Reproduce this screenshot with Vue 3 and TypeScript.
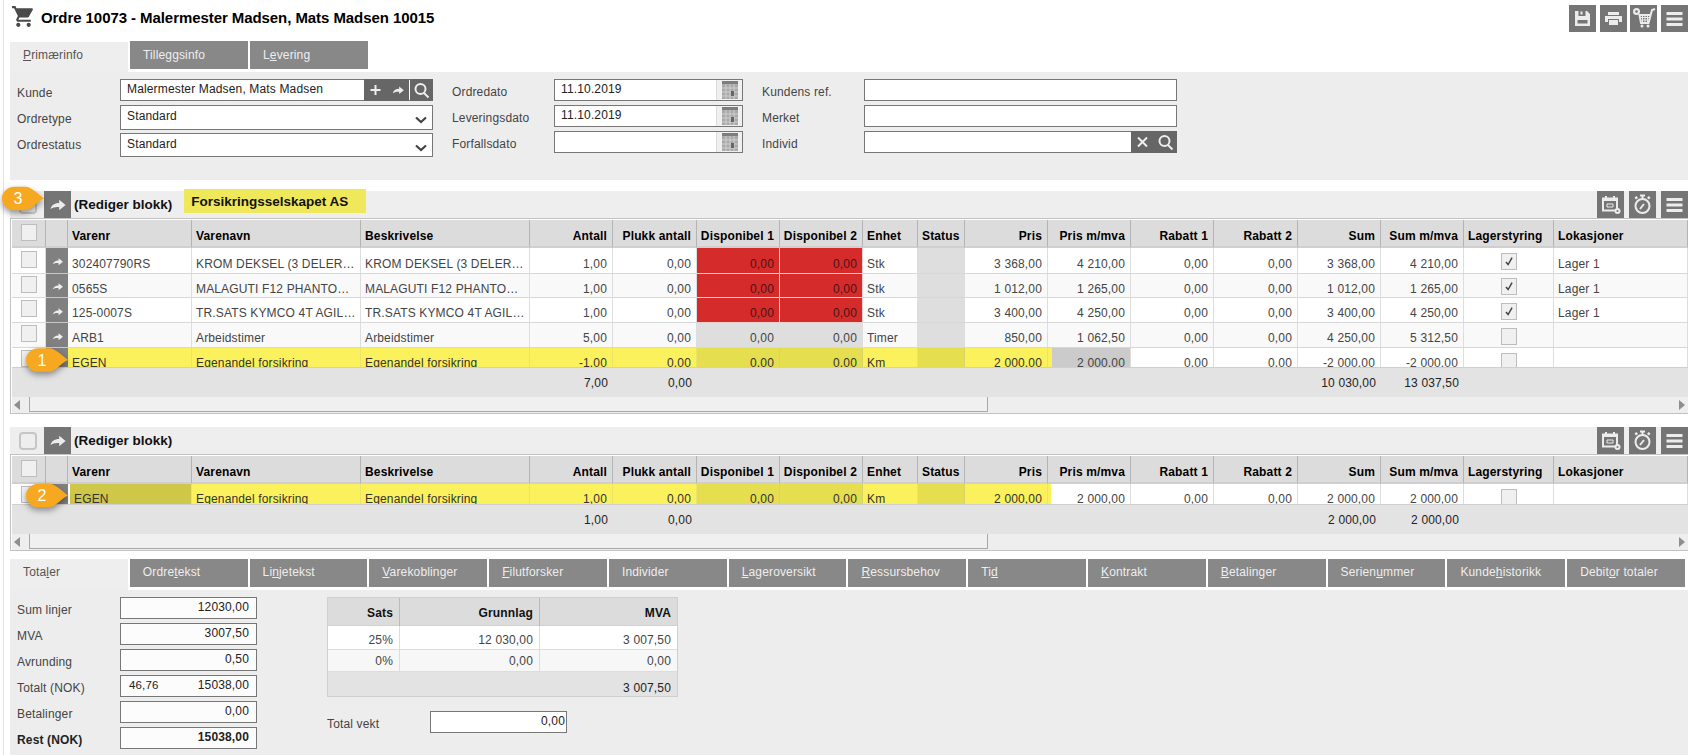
<script setup lang="ts">
type Tab = { a: string; k?: string; b?: string }
type Row = {
  no: string; name: string; desc: string; qty: string; unit: string; price: string; priceVat: string
  sum: string; sumVat: string; h: number; disp: 'red' | 'grey' | 'hl'; hl?: 1 | 2; checked?: boolean; lok?: string
}
type Col = { key: string; label: string; right?: boolean }

const arrow = 'M3 18c1-5 5-8 11-8V6l8 6.5-8 6.5v-4c-4.500-.5-8 .5-11 2.500z'
const cart = 'M7 18c-1.100 0-1.990.9-1.990 2S5.900 22 7 22s2-.9 2-2-.9-2-2-2zM1 2v2h2l3.600 7.590-1.350 2.450c-.16.28-.25.61-.25.96 0 1.100.9 2 2 2h12v-2H7.420c-.14 0-.25-.11-.25-.25l.03-.12.9-1.630h7.450c.75 0 1.410-.41 1.750-1.030l3.580-6.490c.08-.14.12-.31.12-.48 0-.55-.45-1-1-1H5.210l-.94-2H1zm16 16c-1.100 0-1.990.9-1.990 2s.89 2 1.990 2 2-.9 2-2-.9-2-2-2z'

const topTabs: Tab[] = [{ a: '', k: 'P', b: 'rimærinfo' }, { a: 'Tilleggsinfo' }, { a: 'L', k: 'e', b: 'vering' }]
const bottomTabs: Tab[] = [
  { a: 'Tota', k: 'l', b: 'er' }, { a: 'Ordre', k: 't', b: 'ekst' }, { a: 'Li', k: 'n', b: 'jetekst' },
  { a: '', k: 'V', b: 'arekoblinger' }, { a: '', k: 'F', b: 'ilutforsker' }, { a: 'Individer' },
  { a: '', k: 'L', b: 'ageroversikt' }, { a: '', k: 'R', b: 'essursbehov' }, { a: 'Ti', k: 'd' },
  { a: '', k: 'K', b: 'ontrakt' }, { a: '', k: 'B', b: 'etalinger' }, { a: 'Serien', k: 'u', b: 'mmer' },
  { a: 'Kunde', k: 'h', b: 'istorikk' }, { a: 'Debit', k: 'o', b: 'r totaler' }
]

const columns: Col[] = [
  { key: 'no', label: 'Varenr' }, { key: 'name', label: 'Varenavn' }, { key: 'desc', label: 'Beskrivelse' },
  { key: 'qty', label: 'Antall', right: true }, { key: 'pick', label: 'Plukk antall', right: true },
  { key: 'd1', label: 'Disponibel 1', right: true }, { key: 'd2', label: 'Disponibel 2', right: true },
  { key: 'unit', label: 'Enhet' }, { key: 'status', label: 'Status' }, { key: 'price', label: 'Pris', right: true },
  { key: 'priceVat', label: 'Pris m/mva', right: true }, { key: 'r1', label: 'Rabatt 1', right: true },
  { key: 'r2', label: 'Rabatt 2', right: true }, { key: 'sum', label: 'Sum', right: true },
  { key: 'sumVat', label: 'Sum m/mva', right: true }, { key: 'lager', label: 'Lagerstyring' }, { key: 'lok', label: 'Lokasjoner' }
]

const blocks: { rows: Row[]; viewport: string; name?: string; totals: Record<string, string> }[] = [
  {
    name: 'Forsikringsselskapet AS',
    viewport: 'vp-large',
    totals: { qty: '7,00', pick: '0,00', sum: '10 030,00', sumVat: '13 037,50' },
    rows: [
      { no: '302407790RS', name: 'KROM DEKSEL (3 DELER…', desc: 'KROM DEKSEL (3 DELER…', qty: '1,00', unit: 'Stk', price: '3 368,00', priceVat: '4 210,00', sum: '3 368,00', sumVat: '4 210,00', h: 26, disp: 'red', checked: true, lok: 'Lager 1' },
      { no: '0565S', name: 'MALAGUTI F12 PHANTO…', desc: 'MALAGUTI F12 PHANTO…', qty: '1,00', unit: 'Stk', price: '1 012,00', priceVat: '1 265,00', sum: '1 012,00', sumVat: '1 265,00', h: 24, disp: 'red', checked: true, lok: 'Lager 1' },
      { no: '125-0007S', name: 'TR.SATS KYMCO 4T AGIL…', desc: 'TR.SATS KYMCO 4T AGIL…', qty: '1,00', unit: 'Stk', price: '3 400,00', priceVat: '4 250,00', sum: '3 400,00', sumVat: '4 250,00', h: 25, disp: 'red', checked: true, lok: 'Lager 1' },
      { no: 'ARB1', name: 'Arbeidstimer', desc: 'Arbeidstimer', qty: '5,00', unit: 'Timer', price: '850,00', priceVat: '1 062,50', sum: '4 250,00', sumVat: '5 312,50', h: 25, disp: 'grey' },
      { no: 'EGEN', name: 'Egenandel forsikring', desc: 'Egenandel forsikring', qty: '-1,00', unit: 'Km', price: '2 000,00', priceVat: '2 000,00', sum: '-2 000,00', sumVat: '-2 000,00', h: 25, disp: 'hl', hl: 1 }
    ]
  },
  {
    viewport: 'vp-small',
    totals: { qty: '1,00', pick: '0,00', sum: '2 000,00', sumVat: '2 000,00' },
    rows: [
      { no: 'EGEN', name: 'Egenandel forsikring', desc: 'Egenandel forsikring', qty: '1,00', unit: 'Km', price: '2 000,00', priceVat: '2 000,00', sum: '2 000,00', sumVat: '2 000,00', h: 25, disp: 'hl', hl: 2 }
    ]
  }
]

const topFields = [
  { label: 'Ordredato', value: '11.10.2019' }, { label: 'Leveringsdato', value: '11.10.2019' }, { label: 'Forfallsdato', value: '' }
]
const totals = [
  { label: 'Sum linjer', value: '12030,00' }, { label: 'MVA', value: '3007,50' }, { label: 'Avrunding', value: '0,50' },
  { label: 'Totalt (NOK)', value: '15038,00', extra: '46,76' }, { label: 'Betalinger', value: '0,00' },
  { label: 'Rest (NOK)', value: '15038,00', strong: true }
]
const bubbles = [
  { n: 3, cls: 'b3' }, { n: 1, cls: 'b1' }, { n: 2, cls: 'b2' }
]

function cellValue(row: Row, key: string): string {
  if (key === 'pick' || key === 'd1' || key === 'd2' || key === 'r1' || key === 'r2') return '0,00'
  if (key === 'status' || key === 'lager') return ''
  if (key === 'lok') return row.lok ?? ''
  return (row as unknown as Record<string, string>)[key] ?? ''
}

function cellClass(row: Row, col: Col): string[] {
  const out: string[] = col.right ? ['right'] : []
  const isDisp = col.key === 'd1' || col.key === 'd2'
  if (isDisp) out.push(row.disp === 'red' ? 'red' : row.disp === 'grey' ? 'grey' : 'hl-dark')
  if (col.key === 'status') out.push(row.hl ? 'hl-dark' : 'grey')
  if (row.hl && ['no', 'name', 'desc', 'qty', 'pick', 'unit', 'price'].includes(col.key)) out.push('hl')
  if (row.hl === 2 && col.key === 'no') out.push('olive')
  if (row.hl && col.key === 'priceVat') out.push(row.hl === 1 ? 'after-hl-grey' : 'after-hl')
  if (row.hl && !out.includes('hl') && !out.includes('hl-dark') && !out.includes('after-hl-grey')) out.push('white')
  return out
}
</script>

<template>
  <div class="page">
    <header class="top">
      <svg class="cart" viewBox="0 0 24 24"><path :d="cart" /></svg>
      <h1>Ordre 10073 - Malermester Madsen, Mats Madsen 10015</h1>
      <div class="top-actions">
        <button class="btn">
          <svg viewBox="0 0 27 27"><path fill-rule="evenodd" d="M6 6h3.500v5h7V6H18l3 3v12H6zM8.500 15v3.500h10V15z" /><rect x="11.500" y="6.500" width="2" height="3" /></svg>
        </button>
        <button class="btn">
          <svg viewBox="0 0 27 27"><path d="M8 7h11v3H8zM5 11h17v6h-3v-3H8v3H5zM9 15h9v5H9z" /></svg>
        </button>
        <button class="btn">
          <svg viewBox="0 0 27 27"><circle cx="6.500" cy="6.500" r="3.500" /><circle cx="6.500" cy="6.500" r="1.300" fill="#757575" /><path class="line" d="M25 4l-3 1-3.500 13H11L9.500 10h11" /><path class="thin" d="M11 12.500h8.500M11.500 15h7.500M12.500 10v8M15 10v8M17.500 10v8" /><circle cx="12" cy="21" r="1.500" /><circle cx="18" cy="21" r="1.500" /></svg>
        </button>
        <button class="btn">
          <svg viewBox="0 0 27 27"><path d="M5.500 7h16v3h-16zM5.500 12.500h16v3h-16zM5.500 18h16v3h-16z" /></svg>
        </button>
      </div>
    </header>

    <nav class="tabs">
      <div v-for="(t, i) in topTabs" :key="i" class="tab" :class="{ active: i === 0 }">{{ t.a }}<u v-if="t.k">{{ t.k }}</u>{{ t.b }}</div>
    </nav>

    <section class="form">
      <div class="fcol fcol-1">
        <div class="frow r1">
          <label>Kunde</label>
          <div class="input grow">
            <span class="val">Malermester Madsen, Mats Madsen</span>
            <span class="addon"><svg viewBox="0 0 23 22"><path class="line" d="M11.500 6v10M6.500 11h10" /></svg></span>
            <span class="addon narrow"><svg viewBox="0 0 24 24"><path :d="arrow" /></svg></span>
            <span class="addon"><svg viewBox="0 0 23 22"><circle class="line" cx="10.500" cy="10" r="5" /><path class="line" d="M14 14l4.500 4.500" /></svg></span>
          </div>
        </div>
        <div class="frow r2">
          <label>Ordretype</label>
          <div class="input grow select">
            <span class="val">Standard</span>
            <svg class="chev" viewBox="0 0 12 8"><path d="M1 1.500l5 4.500 5-4.500" /></svg>
          </div>
        </div>
        <div class="frow r3">
          <label>Ordrestatus</label>
          <div class="input grow select">
            <span class="val">Standard</span>
            <svg class="chev" viewBox="0 0 12 8"><path d="M1 1.500l5 4.500 5-4.500" /></svg>
          </div>
        </div>
      </div>

      <div class="fcol fcol-2">
        <div v-for="f in topFields" :key="f.label" class="frow">
          <label>{{ f.label }}</label>
          <div class="input date">
            <span class="val">{{ f.value }}</span>
            <span class="cal">
              <svg viewBox="0 0 16 18">
                <rect width="16" height="18" fill="#a9a9a9" />
                <rect width="16" height="3" fill="#7d7d7d" />
                <path d="M4 3v15M8 3v15M12 3v15M0 7h16M0 11h16M0 15h16" stroke="#cfcfcf" stroke-width="1" />
                <rect x="9" y="10" width="3" height="5" fill="#666" />
              </svg>
            </span>
          </div>
        </div>
      </div>

      <div class="fcol fcol-3">
        <div class="frow"><label>Kundens ref.</label><div class="input grow" /></div>
        <div class="frow"><label>Merket</label><div class="input grow" /></div>
        <div class="frow">
          <label>Individ</label>
          <div class="input grow">
            <span class="val" />
            <span class="addon"><svg viewBox="0 0 23 22"><path class="line" d="M7 6.500l9 9M16 6.500l-9 9" /></svg></span>
            <span class="addon"><svg viewBox="0 0 23 22"><circle class="line" cx="10.500" cy="10" r="5" /><path class="line" d="M14 14l4.500 4.500" /></svg></span>
          </div>
        </div>
      </div>
    </section>

    <section v-for="(b, bi) in blocks" :key="bi" class="block">
      <div class="block-head">
        <span class="head-check" />
        <button class="btn"><svg viewBox="0 0 27 27"><path transform="translate(4 4) scale(.8)" :d="arrow" /></svg></button>
        <strong class="head-title">(Rediger blokk)</strong>
        <strong v-if="b.name" class="head-name">{{ b.name }}</strong>
        <div class="head-actions">
          <button class="btn">
            <svg viewBox="0 0 27 27"><rect class="line" x="6" y="7.500" width="14" height="12" /><path d="M6 7h14v3H6z" /><path d="M9 5v3M17 5v3" class="line" /><path class="thin" d="M10 13h6v3h-6z" /><circle cx="20.500" cy="20" r="3" /><circle cx="20.500" cy="20" r="1" fill="#757575" /></svg>
          </button>
          <button class="btn">
            <svg viewBox="0 0 27 27"><circle class="line" cx="13.500" cy="15" r="7" /><path d="M11 3.500h5v2h-5zM12.500 5h2v3h-2z" /><path d="M5.500 6.500l2-1.500 1.500 2-2 1.500zM21.500 6.500l-2-1.500-1.500 2 2 1.500z" /><path class="line" d="M11 18l4-5" /></svg>
          </button>
          <button class="btn">
            <svg viewBox="0 0 27 27"><path d="M5.500 7h16v3h-16zM5.500 12.500h16v3h-16zM5.500 18h16v3h-16z" /></svg>
          </button>
        </div>
      </div>

      <div class="grid-wrap">
        <div class="grid head">
          <div class="cell"><span class="check" /></div>
          <div class="cell" />
          <div v-for="c in columns" :key="c.key" class="cell" :class="{ right: c.right }">{{ c.label }}</div>
        </div>
        <div class="viewport" :class="b.viewport">
          <div
            v-for="(r, ri) in b.rows"
            :key="ri"
            class="grid row"
            :class="{ alt: ri % 2 === 1, lit: r.hl }"
            :style="{ height: r.h + 'px' }"
          >
            <div class="cell check-cell"><span class="check" /></div>
            <div class="cell arrow-cell"><svg viewBox="0 0 24 24"><path :d="arrow" /></svg></div>
            <div v-for="c in columns" :key="c.key" class="cell" :class="cellClass(r, c)">
              <span v-if="c.key === 'lager'" class="check center">
                <svg v-if="r.checked" viewBox="0 0 16 16"><path d="M4.500 8.500l2.500 3 4.500-8" /></svg>
              </span>
              <template v-else>{{ cellValue(r, c.key) }}</template>
            </div>
          </div>
        </div>
        <div class="grid foot">
          <div class="cell" />
          <div class="cell" />
          <div v-for="c in columns" :key="c.key" class="cell" :class="{ right: c.right }">{{ b.totals[c.key] }}</div>
        </div>
        <div class="scroll">
          <span class="sarrow left" />
          <span class="thumb" />
          <span class="sarrow rightarrow" />
        </div>
      </div>
    </section>

    <nav class="tabs bottom-tabs">
      <div v-for="(t, i) in bottomTabs" :key="i" class="tab" :class="{ active: i === 0 }">{{ t.a }}<u v-if="t.k">{{ t.k }}</u>{{ t.b }}</div>
    </nav>

    <section class="summary">
      <div class="sum-fields">
        <div v-for="t in totals" :key="t.label" class="sum-row" :class="{ strong: t.strong }">
          <label>{{ t.label }}</label>
          <div class="sum-input">
            <span v-if="t.extra" class="extra">{{ t.extra }}</span>
            <span class="amount">{{ t.value }}</span>
          </div>
        </div>
      </div>
      <div class="sum-right">
        <div class="vat">
          <div class="vat-row vat-head"><div>Sats</div><div>Grunnlag</div><div>MVA</div></div>
          <div class="vat-row vat-a"><div>25%</div><div>12 030,00</div><div>3 007,50</div></div>
          <div class="vat-row vat-b"><div>0%</div><div>0,00</div><div>0,00</div></div>
          <div class="vat-row vat-foot"><div /><div /><div>3 007,50</div></div>
        </div>
        <div class="weight">
          <label>Total vekt</label>
          <div class="weight-input">0,00</div>
        </div>
      </div>
    </section>

    <div v-for="b in bubbles" :key="b.n" class="bubble" :class="b.cls">
      <svg viewBox="0 0 45 26"><path d="M14 1h11c6 0 12 7 19 12-7 3-13 12-19 12H13C6 25 1 19 1 13S6 1 14 1z" /></svg>
      <span>{{ b.n }}</span>
    </div>
  </div>
</template>

<style>
html, body { margin: 0; background: #fff; overflow: hidden; }
</style>

<style scoped>
.page {
  position: relative;
  width: 1691px;
  height: 755px;
  box-sizing: border-box;
  padding: 0 3px 0 10px;
  overflow: hidden;
  font: 12px/14px "Liberation Sans", Arial, sans-serif;
  letter-spacing: .15px;
  color: #444;
  background: #fff;
}
.page::before {
  content: "";
  position: absolute;
  left: 3px;
  top: 0;
  bottom: 0;
  width: 1px;
  background: #e2e2e2;
}
.top { display: flex; align-items: center; height: 41px; }
.cart { width: 25px; height: 25px; margin: -9px -2px 0 1px; fill: #4a4a4a; flex: none; }
h1 { margin: -5px 0 0 7px; font: bold 15px/16px "Liberation Sans", Arial, sans-serif; letter-spacing: -.07px; color: #000; }
.top-actions { display: flex; gap: 3.67px; margin: -5px 0 0 auto; }
.btn {
  display: block;
  width: 27px;
  height: 27px;
  padding: 0;
  border: 0;
  background: #757575;
  flex: none;
}
.btn svg { display: block; width: 27px; height: 27px; fill: #ececec; }
.line { fill: none; stroke: #ececec; stroke-width: 2; }
.thin { fill: none; stroke: #ececec; stroke-width: 1; }

.tabs { display: flex; gap: 2px; height: 31px; align-items: flex-start; }
.tab {
  box-sizing: border-box;
  width: 118px;
  height: 28px;
  padding: 7px 0 0 13px;
  background: #888;
  color: #eee;
  white-space: nowrap;
}
.tab.active { height: 30px; margin-top: 1px; background: #eee; color: #555; }
.tabs .tab.active { padding-top: 6px; }

.form {
  display: flex;
  box-sizing: border-box;
  height: 108px;
  padding: 7px 0 0 7px;
  background: #ededed;
}
.fcol { display: flex; flex-direction: column; gap: 4px; }
.fcol-1 { width: 416px; gap: 0; }
.fcol-2 { width: 291px; margin-left: 19px; }
.fcol-3 { width: 415px; margin-left: 19px; }
.frow { display: flex; height: 22px; }
.frow label { padding-top: 6px; line-height: 14px; color: #444; }
.fcol-1 label { width: 103px; flex: none; }
.fcol-2 label { width: 102px; flex: none; }
.fcol-3 label { width: 102px; flex: none; }
.r1 label { padding-top: 7px; }
.r2 { height: 25px; margin-top: 4px; }
.r3 { height: 24px; margin-top: 3px; }
.r2 label { padding-top: 7px; }
.r3 label { padding-top: 5px; }
.input {
  display: flex;
  box-sizing: border-box;
  border: 1px solid #777;
  background: #fff;
  color: #222;
  height: 100%;
}
.grow { flex: 1; }
.val { flex: 1; padding: 2px 0 0 6px; white-space: nowrap; }
.select { align-items: flex-start; position: relative; }
.select .val { padding-top: 3px; }
.chev { width: 12px; height: 8px; margin: 10px 5px 0 0; fill: none; stroke: #444; stroke-width: 2.200; flex: none; }
.addon {
  width: 23px;
  margin: -1px -1px -1px 2px;
  background: #666;
  flex: none;
}
.addon + .addon { margin-left: 1px; }
.addon.narrow { width: 22px; }
.addon.narrow + .addon { margin-left: 2px; }
.addon svg { display: block; width: 100%; height: 100%; fill: #eee; }
.addon .line { stroke: #eee; }
.addon.narrow svg { padding: 4px; box-sizing: border-box; }
.date { width: 189px; }
.cal {
  display: flex;
  width: 25px;
  align-items: center;
  justify-content: center;
  background: #f0f0f0;
  border-left: 1px solid #ddd;
  flex: none;
}
.cal svg { width: 16px; height: 18px; }

.block { margin-top: 11px; }
.block + .block { margin-top: 13px; }
.block-head { display: flex; align-items: center; height: 27px; background: #eee; }
.head-check {
  box-sizing: border-box;
  width: 18px;
  height: 18px;
  margin: 0 7px 0 9px;
  border: 2px solid #c6c6c6;
  border-radius: 4px;
  background: #eee;
  flex: none;
}
.head-title { margin: 0 0 0 3px; color: #111; font-weight: bold; font-size: 13.500px; letter-spacing: 0; }
.head-name {
  box-sizing: border-box;
  align-self: flex-start;
  width: 182px;
  height: 24px;
  margin: -2px 0 0 12px;
  padding: 6px 0 0 7px;
  background: #efe85a;
  color: #111;
  font-weight: bold;
  font-size: 13.500px;
  letter-spacing: 0;
}
.head-actions { display: flex; gap: 5px; margin-left: auto; }

.grid-wrap {
  box-sizing: border-box;
  border: 1px solid #c2c2c2;
  border-right: 0;
  padding: 1px 0 0 1px;
}
.grid {
  display: grid;
  grid-template-columns: 34px 22px 124px 169px 169px 83px 84px 83px 83px 55px 47px 83px 83px 83px 84px 83px 83px 90px 134px;
}
.cell {
  box-sizing: border-box;
  display: flex;
  align-items: center;
  padding: 6px 4px 0;
  border-right: 1px solid #ddd;
  border-bottom: 1px solid #d8d8d8;
  white-space: nowrap;
  overflow: hidden;
}
.cell.right { justify-content: flex-end; padding-right: 5px; }
.head { height: 28px; background: #dcdcdc; }
.head .cell {
  color: #000;
  font-weight: bold;
  padding-top: 5px;
  border-right-color: #b4b4b4;
  border-bottom: 2px solid #cfcfcf;
}
.head .cell:nth-child(-n+2) { font-weight: normal; }
.viewport { overflow: hidden; }
.vp-large { height: 119px; }
.vp-small { height: 20px; }
.row { background: #fff; }
.row.alt { background: #f9f9f9; }
.check {
  display: block;
  box-sizing: border-box;
  width: 16px;
  height: 17px;
  border: 1px solid #bdbdbd;
  background: #f0f0f0;
  flex: none;
}
.check svg { display: block; width: 14px; height: 15px; fill: none; stroke: #444; stroke-width: 1.700; }
.check-cell, .head .cell:first-child { justify-content: center; padding: 0 0 3px; }
.head .cell:first-child { padding: 0 0 1px; }
.check.center { margin: -4px auto 0; }
.arrow-cell { background: #808080; padding: 0; justify-content: center; border-right: 0; border-bottom-color: #c9c9c9; }
.arrow-cell svg { width: 13px; height: 13px; fill: #eee; margin-top: 2px; }
.red { background: #d52b2b; color: #4a1414; border-right-color: #f0d0d0; border-bottom-color: #f0d0d0; }
.grey { background: #dedede; }
.hl { background: #fbf15c; color: #333; border-right-color: #ece46a; }
.hl-dark { background: #e5df50; color: #333; border-right-color: #d9d46a; }
.olive { background: #cfc748; margin-left: 2px; }
.after-hl-grey { background: #cbcbcb; border-left: 4px solid #fbf15c; }
.after-hl { background: #fff; border-left: 3px solid #fbf15c; }
.white { background: #fff; }
.foot { height: 30px; background: #e3e3e3; border-top: 1px solid #cfcfcf; color: #222; box-sizing: border-box; }
.foot .cell { border: 0; padding-top: 1px; }
.scroll { display: flex; align-items: stretch; height: 16px; background: #eee; position: relative; }
.sarrow { width: 0; height: 0; align-self: center; border: 5px solid transparent; }
.left { margin-left: 2px; border-left: 0; border-right: 6px solid #8e8e8e; }
.thumb {
  box-sizing: border-box;
  width: 959px;
  height: 15px;
  margin-left: 9px;
  border: 1px solid #a8a8a8;
  border-top: 0;
  background: #f0f0f0;
}
.rightarrow { margin-left: auto; margin-right: 3px; border-right: 0; border-left: 6px solid #8e8e8e; }

.bottom-tabs { margin-top: 8px; padding-right: 3px; }
.bottom-tabs .tab { flex: 1; width: auto; padding-top: 6px; }
.bottom-tabs .tab.active { height: 31px; margin-top: 0; padding-top: 6px; }

.summary { display: flex; height: 165px; box-sizing: border-box; padding: 7px 0 0 7px; background: #ededed; }
.sum-fields { display: flex; flex-direction: column; gap: 4px; width: 310px; flex: none; }
.sum-row { display: flex; height: 22px; }
.sum-row label { width: 103px; padding-top: 6px; flex: none; }
.sum-input {
  box-sizing: border-box;
  display: flex;
  width: 137px;
  height: 22px;
  padding: 2px 7px 0 8px;
  border: 1px solid #777;
  background: #fcfcfc;
  color: #222;
}
.extra { font-size: 11.500px; }
.amount { margin-left: auto; }
.strong label, .strong .amount { font-weight: bold; color: #222; }
.sum-right { display: flex; flex-direction: column; }
.vat { width: 351px; box-sizing: border-box; border: 1px solid #cfcfcf; }
.vat-row { display: grid; grid-template-columns: 72px 140px 137px; }
.vat-row > div { box-sizing: border-box; padding: 0 6px 0 0; text-align: right; border-right: 1px solid #ddd; }
.vat-row > div:last-child { border-right: 0; }
.vat-head { height: 28px; background: #dcdcdc; color: #111; font-weight: bold; line-height: 30px; border-bottom: 1px solid #cfcfcf; box-sizing: border-box; }
.vat-head > div { border-right-color: #bbb; }
.vat-a { height: 24px; background: #fff; line-height: 29px; border-bottom: 1px solid #ddd; box-sizing: border-box; }
.vat-b { height: 22px; background: #f7f7f7; line-height: 22px; border-bottom: 1px solid #ddd; box-sizing: border-box; }
.vat-foot { height: 24px; background: #e3e3e3; line-height: 33px; color: #222; }
.vat-foot > div { border: 0; }
.weight { display: flex; margin-top: 14px; }
.weight label { width: 103px; padding-top: 6px; }
.weight-input {
  box-sizing: border-box;
  width: 137px;
  height: 22px;
  padding: 2px 1px 0 0;
  border: 1px solid #777;
  background: #fff;
  text-align: right;
  color: #222;
}

.bubble { position: absolute; width: 44px; height: 27px; }
.bubble svg {
  position: absolute;
  inset: 0;
  width: 100%;
  height: 100%;
  fill: #f5a820;
  filter: drop-shadow(0 3px 3px rgba(0, 0, 0, .4));
}
.bubble span {
  position: absolute;
  left: 0;
  top: 4px;
  width: 34px;
  text-align: center;
  color: #fff;
  font-size: 16px;
  line-height: 20px;
}
.b1 span { top: 5px; }
.b3 { left: 1px; top: 185px; }
.b1 { left: 25px; top: 346px; height: 28px; }
.b2 { left: 25px; top: 482px; }
</style>
